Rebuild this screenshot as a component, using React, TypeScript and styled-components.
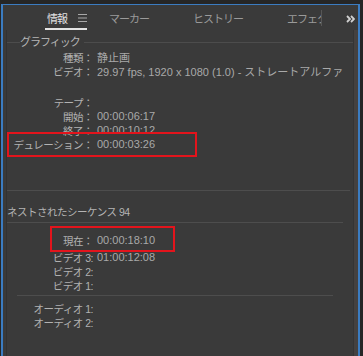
import React from 'react';
import styled, { createGlobalStyle } from 'styled-components';

const GlobalStyle = createGlobalStyle`
  body {
    margin: 0;
    background: #262626;
  }
`;

const cjk = `"Noto Sans CJK JP", "Liberation Sans", sans-serif`;
const latin = `"Liberation Sans", "Noto Sans CJK JP", sans-serif`;

const MenuIcon = () => (
  <svg width="9" height="8" viewBox="0 0 9 8">
    <path d="M0 0.5h9M0 4h9M0 7.5h9" stroke="#a8a8a8" strokeWidth="1" />
  </svg>
);

const MoreIcon = () => (
  <svg width="9" height="8" viewBox="0 0 9 8">
    <path
      d="M1 1l3 3-3 3M5 1l3 3-3 3"
      stroke="#d0d0d0"
      strokeWidth="1.8"
      fill="none"
    />
  </svg>
);

interface Field {
  label: string;
  value?: string;
  top?: number;
  mark?: { top: number; height: number; left: number; width: number };
}

const graphic: Field[] = [
  { label: '種類：', value: '静止画', top: 2 },
  { label: 'ビデオ：', value: '29.97 fps, 1920 x 1080 (1.0) - ストレートアルファ' },
  { label: 'テープ：', top: 17 },
  { label: '開始：', value: '00:00:06:17' },
  { label: '終了：', value: '00:00:10:12' },
  {
    label: 'デュレーション：',
    value: '00:00:03:26',
    mark: { top: -5, height: 25, left: 0, width: 190 },
  },
];

const current: Field = {
  label: '現在：',
  value: '00:00:18:10',
  top: 10,
  mark: { top: -7, height: 26, left: 43, width: 125 },
};

const tracks: Field[] = [
  { label: 'ビデオ 3:', value: '01:00:12:08', top: 3 },
  { label: 'ビデオ 2:' },
  { label: 'ビデオ 1:' },
];

const audio: Field[] = [
  { label: 'オーディオ 1:', top: 5 },
  { label: 'オーディオ 2:' },
];

const renderRow = (f: Field) => (
  <Row key={f.label} $top={f.top}>
    <Label>{f.label}</Label>
    {f.value && <Value>{f.value}</Value>}
    {f.mark && (
      <Mark
        $top={f.mark.top}
        $height={f.mark.height}
        $left={f.mark.left}
        $width={f.mark.width}
      />
    )}
  </Row>
);

export default function App() {
  return (
    <>
      <GlobalStyle />
      <Frame>
        <Panel>
          <TabBar>
            <TabStrip>
              <Tab $active>
                情報
                <MenuIcon />
              </Tab>
              <Tab>マーカー</Tab>
              <Tab>ヒストリー</Tab>
              <Tab>エフェクトコントロール</Tab>
            </TabStrip>
            <TabDivider />
            <MoreButton>
              <MoreIcon />
            </MoreButton>
          </TabBar>

          <Body>
            <Content>
              <Heading>
                <HeadLine $width={13} />
                <HeadText>グラフィック</HeadText>
                <HeadLine />
              </Heading>
              {graphic.map(renderRow)}

              <Separator $top={39} $left={-2} $right={3} />
              <SequenceTitle>ネストされたシーケンス 94</SequenceTitle>
              <Separator $top={3} $left={0} $right={10} />

              {renderRow(current)}
              {tracks.map(renderRow)}

              <Separator $top={3} $left={10} $right={20} />
              {audio.map(renderRow)}
            </Content>
            <Scrollbar />
          </Body>
        </Panel>
      </Frame>
    </>
  );
}

const Frame = styled.div`
  width: 363px;
  height: 356px;
  box-sizing: border-box;
  padding: 4px 3px 0 1px;
  display: flex;
`;

const Panel = styled.div`
  flex: 1;
  display: flex;
  flex-direction: column;
  min-width: 0;
  background: #3a3a3a;
  border: 2px solid #3b7cc1;
  border-top-width: 1px;
  border-bottom: none;
`;

const TabBar = styled.div`
  height: 25px;
  display: flex;
  align-items: stretch;
  flex-shrink: 0;
`;

const TabStrip = styled.div`
  width: 318px;
  flex-shrink: 0;
  box-sizing: border-box;
  padding-left: 42px;
  display: flex;
  overflow: hidden;
`;

const Tab = styled.div<{ $active?: boolean }>`
  display: flex;
  align-items: center;
  gap: 11px;
  flex-shrink: 0;
  white-space: nowrap;
  padding: ${(p) => (p.$active ? '2px 0 0 2px' : '2px 22px 0')};
  border-bottom: 2px solid ${(p) => (p.$active ? '#e4e4e4' : 'transparent')};
  font-family: ${cjk};
  font-size: 11px;
  letter-spacing: -1px;
  color: ${(p) => (p.$active ? '#e2e2e2' : '#9a9a9a')};
`;

const TabDivider = styled.div`
  width: 1px;
  height: 16px;
  align-self: center;
  margin-top: 1px;
  background: #565656;
`;

const MoreButton = styled.div`
  flex: 1;
  display: flex;
  align-items: center;
  justify-content: flex-end;
  padding: 2px 3px 0 0;
`;

const Body = styled.div`
  flex: 1;
  display: flex;
  padding-left: 3px;
  min-height: 0;
`;

const Content = styled.div`
  flex: 1;
  min-width: 0;
  display: flex;
  flex-direction: column;
  border-left: 1px solid #323232;
  overflow: hidden;
`;

const Scrollbar = styled.div`
  width: 4px;
  background: #444140;
  border-left: 1px solid #343434;
`;

const Heading = styled.div`
  display: flex;
  align-items: center;
  height: 14px;
  margin-top: 4px;
`;

const HeadLine = styled.div<{ $width?: number }>`
  height: 1px;
  margin-top: 3px;
  background: #4c4c4c;
  ${(p) => (p.$width ? `width: ${p.$width}px;` : 'flex: 1;')}
`;

const HeadText = styled.div`
  padding-right: 4px;
  font-family: ${cjk};
  font-size: 11px;
  letter-spacing: -1px;
  color: #b6b6b6;
`;

const Row = styled.div<{ $top?: number }>`
  position: relative;
  display: flex;
  align-items: center;
  height: 14px;
  margin-top: ${(p) => p.$top ?? 0}px;
  white-space: nowrap;
`;

const Label = styled.div`
  width: 86px;
  flex-shrink: 0;
  text-align: right;
  font-family: ${latin};
  font-size: 10.5px;
  letter-spacing: -0.5px;
  color: #b2b2b2;
`;

const Value = styled.div`
  margin-left: 4px;
  font-family: ${latin};
  font-size: 11px;
  color: #a9a9a9;
`;

const Mark = styled.div<{
  $top: number;
  $height: number;
  $left: number;
  $width: number;
}>`
  position: absolute;
  box-sizing: border-box;
  top: ${(p) => p.$top}px;
  left: ${(p) => p.$left}px;
  width: ${(p) => p.$width}px;
  height: ${(p) => p.$height}px;
  border: 2px solid #e3141c;
`;

const Separator = styled.div<{ $top: number; $left: number; $right: number }>`
  height: 1px;
  flex-shrink: 0;
  background: #4d4d4d;
  margin: ${(p) => p.$top}px ${(p) => p.$right}px 0 ${(p) => p.$left}px;
`;

const SequenceTitle = styled.div`
  height: 14px;
  line-height: 14px;
  margin-top: 14px;
  font-family: ${latin};
  font-size: 10.5px;
  letter-spacing: -0.5px;
  color: #b4b4b4;
  white-space: nowrap;
`;
